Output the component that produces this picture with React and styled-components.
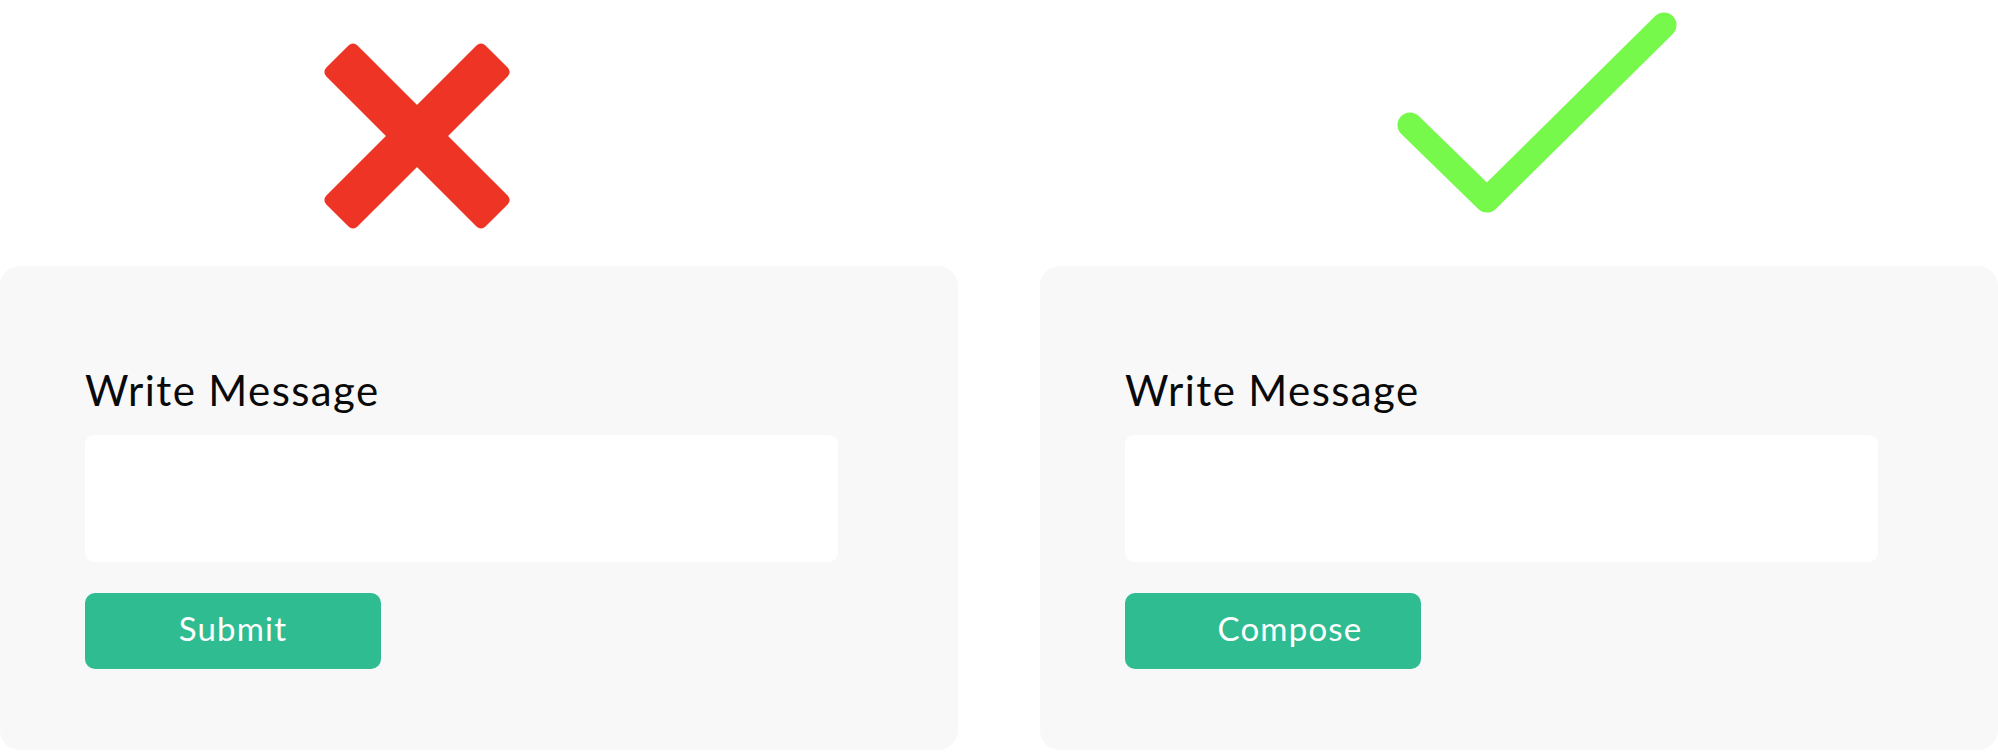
import React from "react";
import styled, { createGlobalStyle } from "styled-components";

const Global = createGlobalStyle`
  html, body { margin: 0; padding: 0; background: #ffffff; }
  body { font-family: Lato, "Noto Sans", sans-serif; }
  * { box-sizing: border-box; }
`;

const Page = styled.div`
  display: grid;
  grid-template-columns: 958px 958px;
  grid-template-rows: 266px 484px;
  column-gap: 82px;
  width: 1998px;
  height: 752px;
  overflow: hidden;
`;

const IconCell = styled.div`
  padding-left: ${(p) => p.$left}px;
  padding-top: ${(p) => p.$top}px;
`;

const Card = styled.div`
  background: #f8f8f8;
  border-radius: 20px;
  padding: 103px 120px 0 85px;
  display: flex;
  flex-direction: column;
`;

const Label = styled.div`
  font-family: Lato, "Noto Sans", sans-serif;
  font-size: 42px;
  line-height: 42px;
  color: #0a0a0a;
  letter-spacing: 1.4px;
  margin: 0;
`;

const MessageBox = styled.textarea`
  display: block;
  margin-top: 24px;
  width: 753px;
  height: 127px;
  background: #ffffff;
  border: none;
  border-radius: 9px;
  resize: none;
  outline: none;
  padding: 0;
`;

const Button = styled.button`
  margin-top: 31px;
  width: 296px;
  height: 76px;
  background: #2fbc91;
  border: none;
  border-radius: 10px;
  color: #ffffff;
  font-family: Lato, "Noto Sans", sans-serif;
  font-size: 33px;
  letter-spacing: 1.2px;
  display: flex;
  align-items: center;
  justify-content: center;
  padding: 0 0 6px ${(p) => p.$shift || 0}px;
  cursor: pointer;
`;

const CrossIcon = () => (
  <svg width="190" height="190" viewBox="0 0 190 190" style={{ display: "block" }}>
    <g transform="rotate(45 95 95)" fill="#ee3424">
      <rect x="-17.5" y="73" width="225" height="44" rx="6" />
      <rect x="73" y="-17.5" width="44" height="225" rx="6" />
    </g>
  </svg>
);

const CheckIcon = () => (
  <svg width="300" height="220" viewBox="0 0 300 220" style={{ display: "block" }}>
    <polyline
      points="15,115 92,190 269,15"
      fill="none"
      stroke="#77f94b"
      strokeWidth="25"
      strokeLinecap="round"
      strokeLinejoin="round"
    />
  </svg>
);

export default function App() {
  return (
    <>
      <Global />
      <Page>
        <IconCell $left={322} $top={41}>
          <CrossIcon />
        </IconCell>
        <IconCell $left={355} $top={10}>
          <CheckIcon />
        </IconCell>
        <Card>
          <Label>Write Message</Label>
          <MessageBox aria-label="Write Message" />
          <Button>Submit</Button>
        </Card>
        <Card>
          <Label>Write Message</Label>
          <MessageBox aria-label="Write Message" />
          <Button $shift={34}>Compose</Button>
        </Card>
      </Page>
    </>
  );
}
